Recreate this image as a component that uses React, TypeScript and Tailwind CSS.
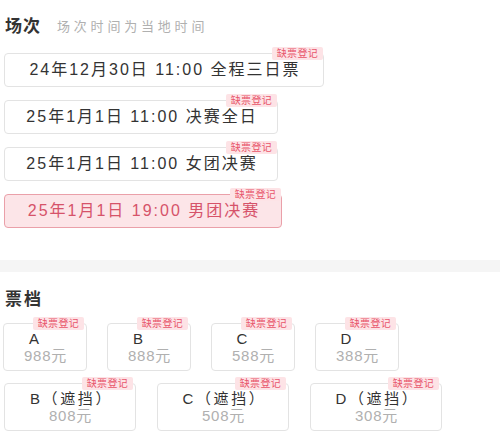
import React from "react";

const FONT = '"Liberation Sans", "Noto Sans CJK SC", sans-serif';

function Badge({ className = "" }: { className?: string }) {
  return (
    <span
      className={`absolute -top-[7px] h-[13px] px-[5px] flex items-center bg-[#fde3e6] text-[#e8556a] text-[10px] leading-[13px] tracking-[0.3px] rounded-[2px] ${className}`}
    >
      缺票登记
    </span>
  );
}

const sessions = [
  { text: "24年12月30日 11:00 全程三日票", w: "w-[320px]", sel: false },
  { text: "25年1月1日 11:00 决赛全日", w: "w-[274px]", sel: false },
  { text: "25年1月1日 11:00 女团决赛", w: "w-[274px]", sel: false },
  { text: "25年1月1日 19:00 男团决赛", w: "w-[278px]", sel: true },
];

const tiers1 = [
  { name: "A", price: "988元" },
  { name: "B", price: "888元" },
  { name: "C", price: "588元" },
  { name: "D", price: "388元" },
];
const tiers2 = [
  { name: "B（遮挡）", price: "808元" },
  { name: "C（遮挡）", price: "508元" },
  { name: "D（遮挡）", price: "308元" },
];

export default function App() {
  return (
    <div className="w-[500px] h-[440px] bg-white overflow-hidden" style={{ fontFamily: FONT }}>
      <div className="pt-[15px] px-[4px]">
        <div className="flex items-center h-[24px] pl-[1px]">
          <span className="text-[17px] font-bold text-[#333] leading-[24px] tracking-[1px]">场次</span>
          <span className="ml-[16px] text-[13px] text-[#b0b0b0] leading-[24px] tracking-[3.8px]">场次时间为当地时间</span>
        </div>
        <div className="mt-[14px] flex flex-col gap-[13px] items-start">
          {sessions.map((s) => (
            <div
              key={s.text}
              className={`relative ${s.w} h-[34px] rounded-[4px] border flex items-center justify-center text-[16px] tracking-[2px] ${
                s.sel
                  ? "bg-[#fce5e8] border-[#eaa0a9] text-[#d6536a]"
                  : "bg-white border-[#e3e3e3] text-[#333]"
              }`}
            >
              <span className="pl-[2px]">{s.text}</span>
              <Badge className="right-0" />
            </div>
          ))}
        </div>
      </div>
      <div className="mt-[32px] h-[12px] bg-[#f5f5f5]" />
      <div className="pt-[16px] px-[3px]">
        <div className="h-[24px] flex items-center pl-[2px]">
          <span className="text-[17px] font-bold text-[#333] leading-[24px] tracking-[2px]">票档</span>
        </div>
        <div className="mt-[11px] flex gap-[20px]">
          {tiers1.map((t) => (
            <div
              key={t.name}
              className="relative w-[84px] h-[48px] rounded-[4px] border border-[#e3e3e3] flex flex-col items-center justify-center"
            >
              <span className="text-[15px] leading-[17px] text-[#333] pr-[22px]">{t.name}</span>
              <span className="text-[15px] leading-[16px] text-[#b0b0b0] mt-[1px] tracking-[0.8px] pl-[1px]">{t.price}</span>
              <Badge className="right-[2px] -top-[6px]" />
            </div>
          ))}
        </div>
        <div className="mt-[12px] flex gap-[21px] pl-[1px]">
          {tiers2.map((t) => (
            <div
              key={t.name}
              className="relative w-[132px] h-[48px] rounded-[4px] border border-[#e3e3e3] flex flex-col items-center justify-center"
            >
              <span className="text-[15px] leading-[17px] text-[#333] tracking-[2.6px] pl-[3px]">{t.name}</span>
              <span className="text-[15px] leading-[16px] text-[#b0b0b0] mt-[1px] tracking-[0.8px] pl-[1px]">{t.price}</span>
              <Badge className="right-[2px] -top-[6px]" />
            </div>
          ))}
        </div>
      </div>
    </div>
  );
}
